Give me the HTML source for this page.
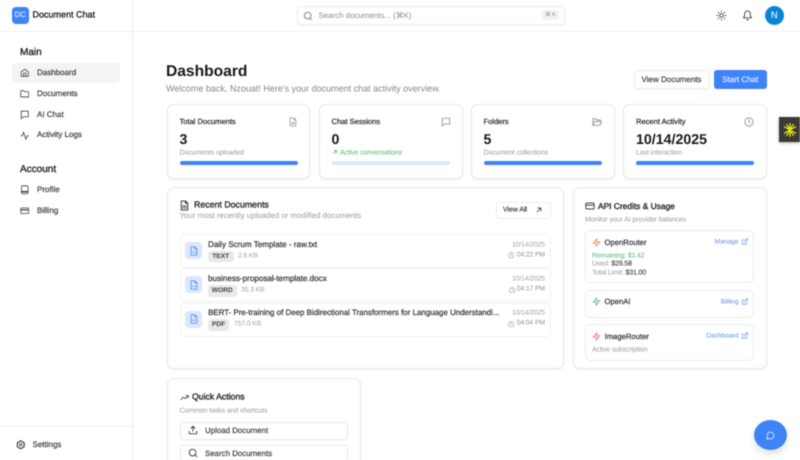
<!DOCTYPE html>
<html><head><meta charset="utf-8"><style>
html,body{margin:0;padding:0;background:#fff}
#p{position:relative;width:800px;height:460px;overflow:hidden;background:#fff;font-family:"Liberation Sans",sans-serif;color:#18181b;filter:blur(.42px);text-rendering:geometricPrecision}
.t{position:absolute;white-space:nowrap;transform:translateY(-50%);line-height:1}
.r{position:absolute;white-space:nowrap;transform:translateY(-50%);line-height:1;text-align:right}
.b{position:absolute;box-sizing:border-box}
.m{-webkit-text-stroke:.2px currentColor}
.s{-webkit-text-stroke:.35px currentColor}
.card{position:absolute;box-sizing:border-box;background:#fff;border:1px solid #e9e9ec;border-radius:7px;box-shadow:0 1px 2px rgba(0,0,0,.07)}
.row{position:absolute;box-sizing:border-box;background:#fff;border:1px solid #f1f1f3;border-radius:5px}
svg{position:absolute;fill:none;stroke:currentColor;stroke-width:2;stroke-linecap:round;stroke-linejoin:round}
.nav{font-size:8px;color:#3f3f46;left:37px;-webkit-text-stroke:.22px currentColor}
.ni{color:#3f3f46;left:19.5px}
.ct{font-size:7.55px;color:#27272a;-webkit-text-stroke:.22px currentColor}
.cv{font-size:14.2px;font-weight:700;color:#18181b}
.cs{font-size:7px;color:#9a9aa3;letter-spacing:-.1px}
.bar{position:absolute;height:4px;border-radius:2px;background:#3f83f8;top:160.5px;width:118px}
.dn{font-size:8.1px;color:#3f3f46;left:208px;-webkit-text-stroke:.28px currentColor}
.bd{position:absolute;box-sizing:border-box;height:11.5px;background:#e8e8eb;border-radius:3px;font-size:6.6px;font-weight:700;color:#3f3f46;text-align:center;line-height:11.5px}
.gr{font-size:6.8px;color:#a1a1aa;letter-spacing:-.1px}
.di{position:absolute;left:185px;width:16.5px;height:17px;background:#dbe7fe;border-radius:4px}
.pn{font-size:7.7px;color:#3f3f46;left:604.5px;-webkit-text-stroke:.28px currentColor}
.ln{font-size:6.6px;color:#5b8def}
.g75{font-size:7px;color:#9a9aa3;left:592px;letter-spacing:-.15px}
.g75 b{color:#52525b;font-weight:400;-webkit-text-stroke:.2px #52525b}
.qa{position:absolute;box-sizing:border-box;left:179.5px;width:168.5px;height:18px;border:1px solid #e9e9ec;border-radius:3px;background:#fff;box-shadow:0 1px 1px rgba(0,0,0,.03)}
</style></head><body><div id="p">

<div class="b" style="left:132px;top:0;width:1px;height:460px;background:#eeeef0"></div>
<div class="b" style="left:0;top:31px;width:800px;height:1px;background:#f1f1f3"></div>
<div class="b" style="left:0;top:426px;width:132px;height:1px;background:#eeeef0"></div>

<div class="b m" style="left:12px;top:7px;width:16.5px;height:16.5px;background:#3f83f8;border-radius:4px;color:#dbe7fe;font-size:7.8px;text-align:center;line-height:16.5px">DC</div>
<div class="t s" style="left:32.5px;top:15px;font-size:9px;color:#27272a">Document Chat</div>

<div class="t s" style="left:20px;top:53px;font-size:10px;color:#27272a">Main</div>
<div class="b" style="left:11.5px;top:63px;width:108.5px;height:19.5px;background:#f4f4f5;border-radius:4px"></div>

<svg class="ni" style="top:68px" width="9.5" height="9.5" viewBox="0 0 24 24"><path d="M3 10l9-7 9 7v11H3z"/><path d="M9 21v-8h6v8"/></svg>
<div class="t nav" style="top:72.5px">Dashboard</div>
<svg class="ni" style="top:89px" width="9.5" height="9.5" viewBox="0 0 24 24"><path d="M2 20V4h7l2 3h11v13z"/></svg>
<div class="t nav" style="top:93.5px">Documents</div>
<svg class="ni" style="top:110px" width="9.5" height="9.5" viewBox="0 0 24 24"><path d="M21 15V3H3v19l5-5h13z"/></svg>
<div class="t nav" style="top:114.5px">AI Chat</div>
<svg class="ni" style="top:130.5px" width="9.5" height="9.5" viewBox="0 0 24 24"><path d="M22 12h-4l-3 9L9 3l-3 9H2"/></svg>
<div class="t nav" style="top:135px">Activity Logs</div>

<div class="t s" style="left:20px;top:170px;font-size:10px;color:#27272a">Account</div>
<svg class="ni" style="top:185px" width="9.5" height="9.5" viewBox="0 0 24 24"><rect x="4" y="2" width="16" height="20" rx="2"/><path d="M4 17h16" stroke-width="4"/></svg>
<div class="t nav" style="top:189.5px">Profile</div>
<svg class="ni" style="top:206px" width="9.5" height="9.5" viewBox="0 0 24 24"><rect x="2" y="5" width="20" height="14" rx="2"/><path d="M2 10h20" stroke-width="3"/></svg>
<div class="t nav" style="top:210.5px">Billing</div>

<svg class="ni" style="left:15.5px;top:440px" width="9.5" height="9.5" viewBox="0 0 24 24"><circle cx="12" cy="12" r="3"/><path d="M12 2l8.5 5v10L12 22l-8.5-5V7z" stroke-width="3"/></svg>
<div class="t nav" style="left:32.5px;top:444.5px">Settings</div>

<div class="b" style="left:297px;top:6px;width:267.5px;height:18.5px;border:1px solid #ececef;border-radius:3px;box-shadow:0 1px 1px rgba(0,0,0,.03)"></div>
<svg style="left:302.5px;top:10.5px;color:#71717a" width="10" height="10" viewBox="0 0 24 24"><circle cx="11" cy="11" r="8"/><path d="M21 21l-4.3-4.3"/></svg>
<div class="t" style="left:318.5px;top:15.5px;font-size:7.9px;color:#8a8a93">Search documents... (⌘K)</div>
<div class="b" style="left:542px;top:10px;width:17px;height:10px;background:#f2f2f4;border-radius:2px;font-size:5.5px;color:#8a8a93;text-align:center;line-height:10px">⌘ K</div>

<svg style="left:716px;top:10px;color:#3f3f46" width="11" height="11" viewBox="0 0 24 24"><circle cx="12" cy="12" r="4"/><path d="M12 2v2M12 20v2M4.9 4.9l1.4 1.4M17.7 17.7l1.4 1.4M2 12h2M20 12h2M6.3 17.7l-1.4 1.4M19.1 4.9l-1.4 1.4"/></svg>
<svg style="left:742px;top:10px;color:#3f3f46" width="11" height="11" viewBox="0 0 24 24"><path d="M6 8a6 6 0 0112 0c0 7 3 9 3 9H3s3-2 3-9"/><path d="M10.3 21a2 2 0 003.4 0"/></svg>
<div class="b m" style="left:764.5px;top:5.5px;width:19.5px;height:19.5px;background:#0a84d6;border-radius:50%;color:#e6f3fc;font-size:9.5px;text-align:center;line-height:19.5px">N</div>

<div class="t" style="left:166px;top:71.7px;font-size:15.6px;font-weight:700;color:#18181b">Dashboard</div>
<div class="t" style="left:166px;top:88.5px;font-size:9px;color:#85858e">Welcome back, Nzouat! Here's your document chat activity overview.</div>

<div class="b m" style="left:633.5px;top:69.5px;width:76px;height:19px;border:1px solid #ececef;border-radius:3px;background:#fff;font-size:8px;color:#3f3f46;text-align:center;line-height:17.5px;box-shadow:0 1px 1px rgba(0,0,0,.04)">View Documents</div>
<div class="b m" style="left:714px;top:69.5px;width:52.5px;height:19px;background:#3f83f8;border-radius:3px;font-size:8px;color:#dce9fe;text-align:center;line-height:19px">Start Chat</div>

<!-- Stat cards -->
<div class="card" style="left:166.5px;top:103.5px;width:143.5px;height:75px"></div>
<div class="card" style="left:319px;top:103.5px;width:143.5px;height:75px"></div>
<div class="card" style="left:471px;top:103.5px;width:143.5px;height:75px"></div>
<div class="card" style="left:623px;top:103.5px;width:143.5px;height:75px"></div>

<div class="t ct" style="left:179.5px;top:121.5px">Total Documents</div>
<div class="t cv" style="left:179.5px;top:139.5px">3</div>
<div class="t cs" style="left:179.5px;top:152.5px">Documents uploaded</div>
<div class="bar" style="left:179.5px"></div>
<svg style="left:288px;top:116.5px;color:#a1a1aa" width="10" height="10" viewBox="0 0 24 24"><path d="M14 2H5v20h14V7z"/><path d="M14 2v5h5M8 13h8M8 17h8"/></svg>

<div class="t ct" style="left:331.5px;top:121.5px">Chat Sessions</div>
<div class="t cv" style="left:331.5px;top:139.5px">0</div>
<svg style="left:332px;top:149px;color:#4cb56c" width="6" height="6" viewBox="0 0 24 24"><path d="M6 18L18 6M9 6h9v9" stroke-width="3"/></svg>
<div class="t cs" style="left:340px;top:152.5px;color:#52b874">Active conversations</div>
<div class="bar" style="left:331.5px;background:#dbe7fe"></div>
<svg style="left:440.5px;top:116.5px;color:#8f8f98" width="10" height="10" viewBox="0 0 24 24"><path d="M21 15V3H3v19l5-5h13z"/></svg>

<div class="t ct" style="left:483.5px;top:121.5px">Folders</div>
<div class="t cv" style="left:483.5px;top:139.5px">5</div>
<div class="t cs" style="left:483.5px;top:152.5px">Document collections</div>
<div class="bar" style="left:483.5px"></div>
<svg style="left:592px;top:116.5px;color:#8f8f98" width="10" height="10" viewBox="0 0 24 24"><path d="M2 20V4h7l2 3h9v4"/><path d="M2 20l4-9h17l-4 9z"/></svg>

<div class="t ct" style="left:636px;top:121.5px">Recent Activity</div>
<div class="t cv" style="left:636px;top:139.5px">10/14/2025</div>
<div class="t cs" style="left:636px;top:152.5px">Last interaction</div>
<div class="bar" style="left:636px"></div>
<svg style="left:744px;top:116.5px;color:#8f8f98" width="10" height="10" viewBox="0 0 24 24"><circle cx="12" cy="12" r="10"/><path d="M12 6v6l4 2"/></svg>

<!-- Yellow tag -->
<div class="b" style="left:779px;top:117px;width:21px;height:25px;background:#3b3a36;box-shadow:0 1px 3px rgba(0,0,0,.3)"></div>
<svg style="left:781.5px;top:121.5px;color:#dfe41a" width="16" height="16" viewBox="0 0 24 24" stroke-width="3.6"><path d="M12 2.5v19M3.8 7.2l16.4 9.6M20.2 7.2L3.8 16.8M7.2 3.8l9.6 16.4M16.8 3.8L7.2 20.2"/></svg>

<!-- Recent documents -->
<div class="card" style="left:166.5px;top:187px;width:397px;height:182px"></div>
<svg style="left:179px;top:199.5px;color:#27272a" width="11" height="11" viewBox="0 0 24 24"><path d="M14 2H5v20h14V7z"/><path d="M14 2v5h5M8 13h8M8 17h8"/></svg>
<div class="t s" style="left:194px;top:205px;font-size:8.8px;color:#27272a">Recent Documents</div>
<div class="t" style="left:179.5px;top:215.5px;font-size:7.9px;color:#9a9aa3">Your most recently uploaded or modified documents</div>
<div class="b" style="left:496px;top:202px;width:54.5px;height:16.5px;border:1px solid #ececef;border-radius:3px;background:#fff"></div>
<div class="t m" style="left:503px;top:211px;font-size:6.9px;color:#3f3f46">View All</div>
<svg style="left:535px;top:206px;color:#27272a" width="8" height="8" viewBox="0 0 24 24" stroke-width="2.5"><path d="M6 18L18 6M8 6h10v10"/></svg>

<div class="row" style="left:179.5px;top:233.5px;width:371px;height:34px"></div>
<div class="row" style="left:179.5px;top:268px;width:371px;height:34px"></div>
<div class="row" style="left:179.5px;top:302.5px;width:371px;height:34px"></div>

<div class="di" style="top:242px"></div>
<svg style="left:188.5px;top:245.5px;color:#5b8def" width="10" height="10" viewBox="0 0 24 24" stroke-width="2.4"><path d="M14 2H5v20h14V7z"/><path d="M14 2v5h5M8 15h8"/></svg>
<div class="t dn" style="top:244.5px">Daily Scrum Template - raw.txt</div>
<div class="bd" style="left:208px;top:250.7px;width:25.5px">TEXT</div>
<div class="t gr" style="left:238px;top:256.5px">2.6 KB</div>
<div class="r gr" style="right:255px;top:245.5px">10/14/2025</div>
<svg style="left:507.5px;top:252px;color:#8f8f98" width="6.5" height="6.5" viewBox="0 0 24 24" stroke-width="2.4"><circle cx="12" cy="12" r="10"/><path d="M12 6v6l4 2"/></svg>
<div class="r gr" style="right:255px;top:255.5px;color:#8f8f98">04:22 PM</div>

<div class="di" style="top:276px"></div>
<svg style="left:188.5px;top:279.5px;color:#5b8def" width="10" height="10" viewBox="0 0 24 24" stroke-width="2.4"><path d="M14 2H5v20h14V7z"/><path d="M14 2v5h5M8 15h8"/></svg>
<div class="t dn" style="top:279px">business-proposal-template.docx</div>
<div class="bd" style="left:208px;top:285px;width:28.5px">WORD</div>
<div class="t gr" style="left:241px;top:290.5px">35.3 KB</div>
<div class="r gr" style="right:255px;top:280px">10/14/2025</div>
<svg style="left:509px;top:286.5px;color:#8f8f98" width="6.5" height="6.5" viewBox="0 0 24 24" stroke-width="2.4"><circle cx="12" cy="12" r="10"/><path d="M12 6v6l4 2"/></svg>
<div class="r gr" style="right:255px;top:290px;color:#8f8f98">04:17 PM</div>

<div class="di" style="top:310.5px"></div>
<svg style="left:188.5px;top:314px;color:#5b8def" width="10" height="10" viewBox="0 0 24 24" stroke-width="2.4"><path d="M14 2H5v20h14V7z"/><path d="M14 2v5h5M8 15h8"/></svg>
<div class="t dn" style="top:313px;font-size:7.95px">BERT- Pre-training of Deep Bidirectional Transformers for Language Understandi...</div>
<div class="bd" style="left:208px;top:319px;width:21px">PDF</div>
<div class="t gr" style="left:234px;top:324.5px">757.0 KB</div>
<div class="r gr" style="right:255px;top:314px">10/14/2025</div>
<svg style="left:507.5px;top:320.5px;color:#8f8f98" width="6.5" height="6.5" viewBox="0 0 24 24" stroke-width="2.4"><circle cx="12" cy="12" r="10"/><path d="M12 6v6l4 2"/></svg>
<div class="r gr" style="right:255px;top:324px;color:#8f8f98">04:04 PM</div>

<!-- API credits -->
<div class="card" style="left:572.5px;top:187px;width:194px;height:182px"></div>
<svg style="left:584.5px;top:200.5px;color:#27272a" width="10" height="10" viewBox="0 0 24 24"><rect x="2" y="5" width="20" height="14" rx="2"/><path d="M2 10h20"/></svg>
<div class="t s" style="left:598px;top:206px;font-size:8.4px;color:#27272a">API Credits &amp; Usage</div>
<div class="t" style="left:585px;top:219.5px;font-size:7px;color:#9a9aa3;letter-spacing:-.1px">Monitor your AI provider balances</div>

<div class="row" style="left:585px;top:230px;width:168.5px;height:53px;border-color:#ececef"></div>
<div class="row" style="left:585px;top:290px;width:168.5px;height:28px;border-color:#ececef"></div>
<div class="row" style="left:585px;top:324px;width:168.5px;height:36.5px;border-color:#ececef"></div>

<svg style="left:591.5px;top:237.5px;color:#f0764a" width="9" height="9" viewBox="0 0 24 24" stroke-width="2.5"><path d="M13 2L3 14h9l-1 8 10-12h-9z"/></svg>
<div class="t pn" style="top:242.5px">OpenRouter</div>
<div class="r ln" style="right:61.5px;top:243px">Manage</div>
<svg style="left:740.5px;top:238px;color:#5b8def" width="7.5" height="7.5" viewBox="0 0 24 24" stroke-width="2.4"><path d="M18 13v7H4V6h7M15 3h6v6M10 14L21 3"/></svg>
<div class="t g75" style="top:255.5px;color:#52b874">Remaining: $1.42</div>
<div class="t g75" style="top:264px">Used: <b>$29.58</b></div>
<div class="t g75" style="top:272.5px">Total Limit: <b>$31.00</b></div>

<svg style="left:591.5px;top:297px;color:#4cb56c" width="9" height="9" viewBox="0 0 24 24" stroke-width="2.5"><path d="M13 2L3 14h9l-1 8 10-12h-9z"/></svg>
<div class="t pn" style="top:302px">OpenAI</div>
<div class="r ln" style="right:61.5px;top:302.5px">Billing</div>
<svg style="left:740.5px;top:297.5px;color:#5b8def" width="7.5" height="7.5" viewBox="0 0 24 24" stroke-width="2.4"><path d="M18 13v7H4V6h7M15 3h6v6M10 14L21 3"/></svg>

<svg style="left:591.5px;top:331.5px;color:#ec5f94" width="9" height="9" viewBox="0 0 24 24" stroke-width="2.5"><path d="M13 2L3 14h9l-1 8 10-12h-9z"/></svg>
<div class="t pn" style="top:336.5px">ImageRouter</div>
<div class="r ln" style="right:61.5px;top:337px">Dashboard</div>
<svg style="left:740.5px;top:332px;color:#5b8def" width="7.5" height="7.5" viewBox="0 0 24 24" stroke-width="2.4"><path d="M18 13v7H4V6h7M15 3h6v6M10 14L21 3"/></svg>
<div class="t g75" style="top:349.5px">Active subscription</div>

<!-- Quick actions -->
<div class="card" style="left:166.5px;top:378px;width:194px;height:100px"></div>
<svg style="left:179.5px;top:392.5px;color:#27272a" width="9" height="9" viewBox="0 0 24 24" stroke-width="2.6"><path d="M2 18l7-7 5 4 8-8M16 7h6v6"/></svg>
<div class="t s" style="left:192px;top:397px;font-size:8.7px;color:#27272a">Quick Actions</div>
<div class="t" style="left:179.5px;top:410.5px;font-size:7px;color:#9a9aa3;letter-spacing:-.1px">Common tasks and shortcuts</div>
<div class="qa" style="top:421.5px"></div>
<svg style="left:187.5px;top:425px;color:#27272a" width="10" height="10" viewBox="0 0 24 24"><path d="M3 15v6h18v-6M12 3v12M7 8l5-5 5 5"/></svg>
<div class="t m" style="left:205px;top:431px;font-size:7.9px;color:#3f3f46">Upload Document</div>
<div class="qa" style="top:444.5px"></div>
<svg style="left:187.5px;top:448px;color:#27272a" width="10" height="10" viewBox="0 0 24 24"><circle cx="11" cy="11" r="8"/><path d="M21 21l-4.3-4.3"/></svg>
<div class="t m" style="left:205px;top:454px;font-size:7.9px;color:#3f3f46">Search Documents</div>

<!-- FAB -->
<div class="b" style="left:754px;top:420px;width:33px;height:30px;background:#3f83f8;border-radius:50%;box-shadow:0 4px 8px rgba(0,0,0,.12)"></div>
<svg style="left:766px;top:430.5px;color:#e6f0fe" width="9" height="9" viewBox="0 0 24 24" stroke-width="2.4"><path d="M7.9 20A9 9 0 1 0 4 16.1L2 22z"/></svg>

</div></body></html>
